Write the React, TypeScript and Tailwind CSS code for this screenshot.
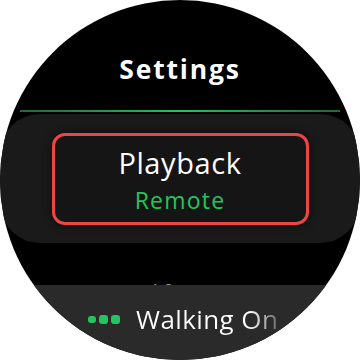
const font = { fontFamily: '"Open Sans", "Noto Sans", sans-serif' };

// ── Now-playing dots ────────────────────────────────────────────────────────
function Dots() {
  return (
    <div className="flex items-center gap-[3px]">
      <span className="h-[7px] w-[8px] rounded-[3px] bg-[#22c55e]" />
      <span className="h-[9px] w-[9px] rounded-[3px] bg-[#22c55e]" />
      <span className="h-[9px] w-[9px] rounded-[3px] bg-[#22c55e]" />
    </div>
  );
}

export default function App() {
  return (
    <div className="h-[360px] w-[360px] bg-white" style={font}>
      <div className="relative flex h-[360px] w-[360px] flex-col items-center overflow-hidden rounded-full bg-black">
        <h1 className="mt-[51px] text-[26.5px] font-bold leading-[36px] tracking-[1.8px] text-white">Settings</h1>

        <div className="mt-[23px] h-[2px] w-[320px] bg-linear-to-r from-[#1d6b3a] via-[#22c55e] to-[#1d6b3a]" />

        <div className="mt-[2px] flex h-[129px] w-full items-center justify-center rounded-[40px] bg-[#1a1a1a]">
          <div className="flex h-[92px] w-[257px] flex-col items-center rounded-[13px] border-[3px] border-[#ef4444] bg-[#151515] shadow-[0_0_8px_rgba(0,0,0,0.6)]">
            <span className="mt-[8px] text-[29px] leading-[38px] tracking-[0.6px] text-white">Playback</span>
            <span className="mt-[3px] text-[23px] font-medium leading-[30px] tracking-[1.2px] text-[#22c55e]">Remote</span>
          </div>
        </div>

        <span className="mt-[35px] text-[20px] leading-[28px] text-[#9a9a9a]">Goal for more</span>

        <div className="absolute inset-x-0 top-[285px] bottom-0 bg-[#2a2a2a]">
          <div className="ml-[88px] mt-[16px] flex items-center gap-[16px]">
            <Dots />
            <span className="bg-linear-to-r from-white from-80% to-white/30 bg-clip-text text-[26px] leading-[36px] tracking-[0.4px] text-transparent">
              Walking On
            </span>
          </div>
        </div>
      </div>
    </div>
  );
}
